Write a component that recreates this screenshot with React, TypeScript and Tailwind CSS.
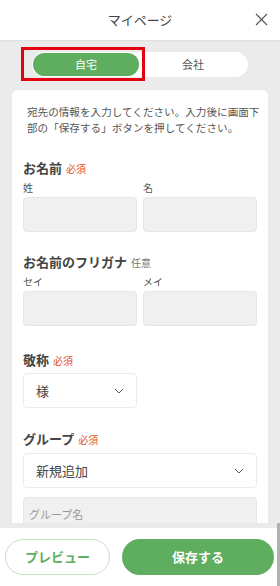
import React from "react";

const font = { fontFamily: '"Noto Sans CJK JP", "Noto Sans", sans-serif' };

function Chevron() {
  return (
    <svg width="10" height="6" viewBox="0 0 10 6" fill="none">
      <path d="M1 1l4 4 4-4" stroke="#555" strokeWidth="1" />
    </svg>
  );
}

function Heading({ label, tag, required }: { label: string; tag: string; required?: boolean }) {
  return (
    <div className="flex items-baseline h-[18px] leading-[18px]">
      <span className="text-[13px] font-bold text-[#444]">{label}</span>
      <span className={`ml-1 text-[10px] ${required ? "text-[#e5512a]" : "text-[#777]"}`}>{tag}</span>
    </div>
  );
}

function NamePair({ a, b }: { a: string; b: string }) {
  return (
    <div className="grid grid-cols-2 gap-[6px] mt-[4px]">
      {[a, b].map((l) => (
        <div key={l}>
          <div className="text-[10px] leading-[14px] text-[#555]">{l}</div>
          <div className="mt-[2px] h-[35px] rounded-[4px] bg-[#f0f0f0] border border-[#e6e6e6]" />
        </div>
      ))}
    </div>
  );
}

export default function App() {
  return (
    <div className="h-screen flex flex-col bg-[#ebebeb] overflow-hidden" style={font}>
      {/* header */}
      <div className="h-10 shrink-0 bg-white relative flex items-center justify-center shadow-[0_1px_2px_rgba(0,0,0,0.06)] z-10">
        <span className="text-[13px] text-[#444]">マイページ</span>
        <svg className="absolute right-[12px] top-[13px]" width="13" height="13" viewBox="0 0 13 13">
          <path d="M1 1l11 11M12 1L1 12" stroke="#555" strokeWidth="1.1" />
        </svg>
      </div>

      {/* main */}
      <div className="flex-1 overflow-hidden">
        <div className="flex justify-center pt-3">
          <div className="relative w-[216px] h-[25px] rounded-full bg-white p-px flex">
            <div className="w-[106px] h-full rounded-full bg-[#5fad5f] text-white text-[11px] flex items-center justify-center">
              自宅
            </div>
            <div className="flex-1 text-[11px] text-[#555] flex items-center justify-center">会社</div>
            <div className="absolute left-[-11px] top-[-5px] w-[124px] h-[34px] border-[3px] border-[#e60012]" />
          </div>
        </div>

        <div className="mx-3 mt-[13px] bg-white rounded-t-[6px] px-[11px] pb-6">
          <p className="px-1 pt-[14px] text-[10.6px] leading-4 text-[#555] whitespace-nowrap">
            宛先の情報を入力してください。入力後に画面下
            <br />
            部の「保存する」ボタンを押してください。
          </p>

          <div className="mt-[23px]">
            <Heading label="お名前" tag="必須" required />
            <NamePair a="姓" b="名" />
          </div>

          <div className="mt-[21px]">
            <Heading label="お名前のフリガナ" tag="任意" />
            <NamePair a="セイ" b="メイ" />
          </div>

          <div className="mt-[25px]">
            <Heading label="敬称" tag="必須" required />
            <div className="mt-[4px] w-[114px] h-[35px] rounded-[4px] border border-[#ececec] flex items-center justify-between pl-[12px] pr-[12px]">
              <span className="text-[13px] text-[#444]">様</span>
              <Chevron />
            </div>
          </div>

          <div className="mt-[22px]">
            <Heading label="グループ" tag="必須" required />
            <div className="mt-[5px] h-[35px] rounded-[4px] border border-[#ececec] flex items-center justify-between pl-[12px] pr-[12px]">
              <span className="text-[13px] text-[#444]">新規追加</span>
              <Chevron />
            </div>
            <div className="mt-[9px] h-[35px] rounded-[4px] bg-[#f0f0f0] border border-[#e6e6e6] flex items-center pl-[5px]">
              <span className="text-[11px] text-[#999]">グループ名</span>
            </div>
          </div>
        </div>
      </div>

      {/* footer */}
      <div className="shrink-0 border-t-[5px] border-[#ebebeb] bg-white relative">
        <div className="flex gap-3 pl-[5px] pr-[6px] py-[11px]">
          <button className="w-[105px] h-9 rounded-full border border-[#c3e1c3] bg-white text-[13px] font-bold text-[#5fad5f]">
            プレビュー
          </button>
          <button className="flex-1 h-9 rounded-full bg-[#5fad5f] text-[13px] font-bold text-white">
            保存する
          </button>
        </div>
        <div className="absolute right-0 top-[-5px] bottom-0 w-[3px] bg-[#b0b0b0]" />
      </div>
    </div>
  );
}
